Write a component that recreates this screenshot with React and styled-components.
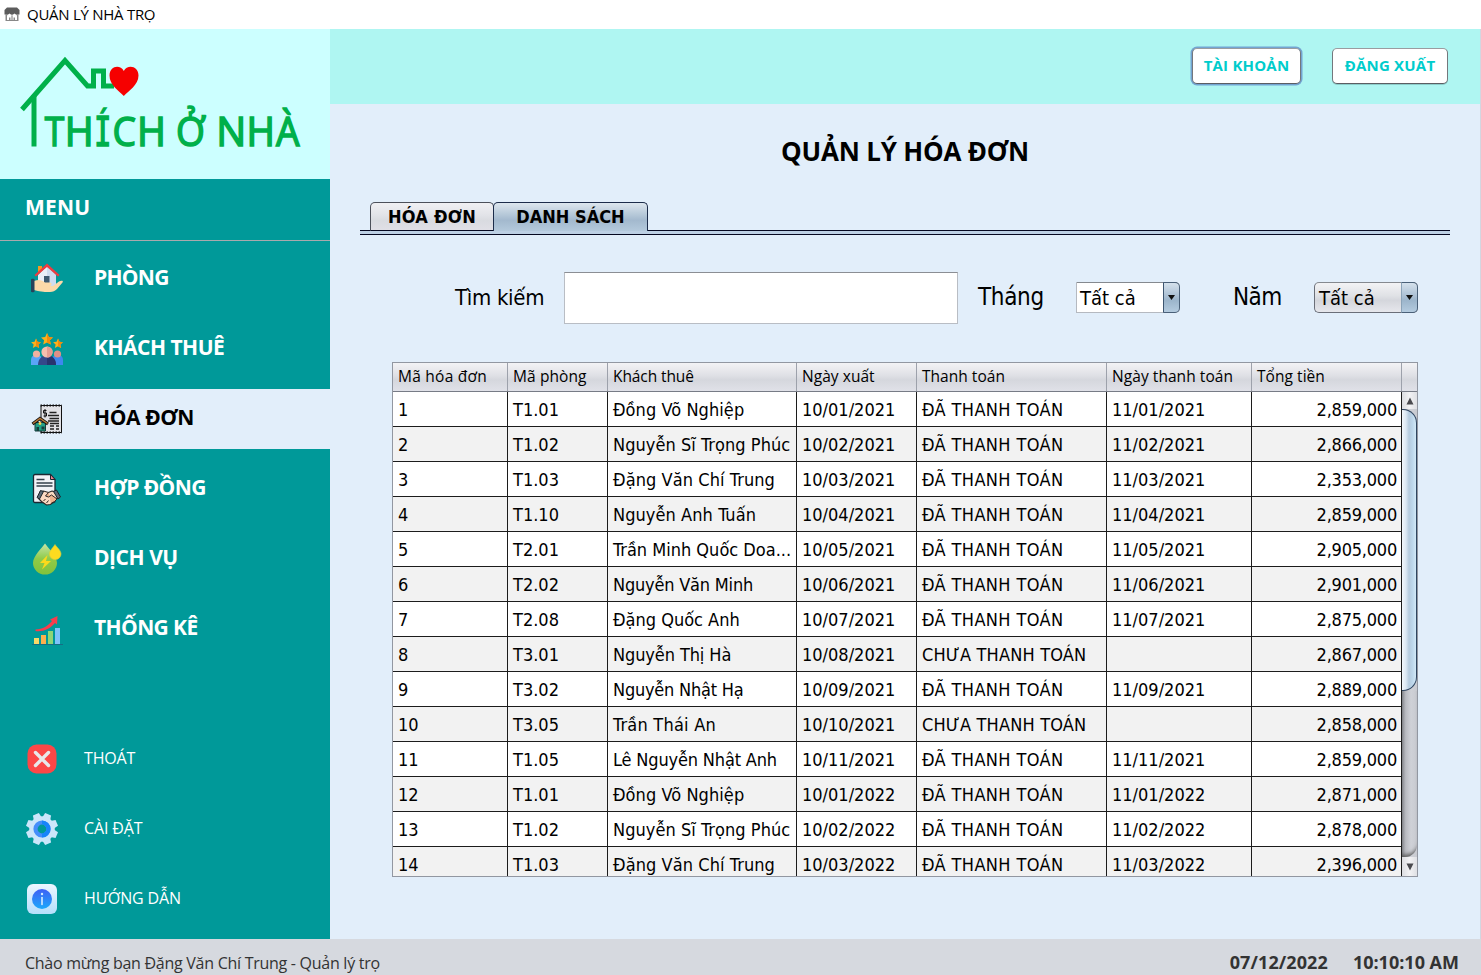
import React from "react";
import styled, { createGlobalStyle } from "styled-components";

const SEGOE = '"Open Sans", "Noto Sans", sans-serif';
const TAHOMA = '"DejaVu Sans Condensed", "DejaVu Sans", sans-serif';

const GlobalStyle = createGlobalStyle`
  * { box-sizing: border-box; }
  body { margin: 0; overflow: hidden; background: #fff; }
`;

const Window = styled.div`
  width: 1481px;
  height: 975px;
  display: flex;
  flex-direction: column;
  overflow: hidden;
  color: #000;
  font-family: ${SEGOE};
  white-space: nowrap;
`;

const TitleBar = styled.header`
  height: 29px;
  flex: none;
  display: flex;
  align-items: center;
  gap: 7px;
  padding-left: 4px;
  background: #fff;
  font-size: 15px;
  line-height: 27px;
  letter-spacing: -0.27px;
  svg { display: block; }
  span { padding-bottom: 1px; }
`;

const Body = styled.div`
  height: 910px;
  flex: none;
  display: flex;
  border-right: 1px solid #d3d6e0;
`;

const Sidebar = styled.aside`
  width: 330px;
  flex: none;
  display: flex;
  flex-direction: column;
  background: #009999;
`;

const LogoBox = styled.div`
  height: 150px;
  background: #ccffff;
  svg { display: block; }
`;

const MenuHeading = styled.div`
  height: 62px;
  padding: 0 0 5px 25px;
  display: flex;
  align-items: center;
  border-bottom: 1px solid #a9a9ad;
  color: #fff;
  font-weight: 700;
  font-size: 21px;
  letter-spacing: 0.2px;
`;

const MenuList = styled.nav`
  display: flex;
  flex-direction: column;
  gap: 10px;
  margin-top: ${(p) => p.$top}px;
`;

const MenuItem = styled.div`
  height: 60px;
  display: flex;
  align-items: center;
  padding-left: 30px;
  gap: 30px;
  background: ${(p) => (p.$active ? "#e2eefa" : "transparent")};
  color: ${(p) => (p.$active ? "#000" : "#fff")};
  svg { display: block; flex: none; }
`;

const MenuLabel = styled.span`
  font-weight: 700;
  font-size: 21px;
  line-height: 30px;
  padding-bottom: 4px;
  letter-spacing: ${(p) => p.$ls || 0}px;
`;

const SmallItem = styled(MenuItem)`
  padding-left: 25px;
  gap: 25px;
`;

const SmallLabel = styled.span`
  font-size: 16px;
  line-height: 22px;
  padding-bottom: 3px;
  letter-spacing: -0.15px;
`;

const Main = styled.main`
  flex: 1;
  display: flex;
  flex-direction: column;
  background: #e2eefa;
`;

const TopBar = styled.div`
  height: 75px;
  flex: none;
  display: flex;
  justify-content: flex-end;
  align-items: center;
  gap: 31px;
  padding-right: 32px;
  background: #aff6f2;
`;

const TopButton = styled.button`
  width: ${(p) => p.$w}px;
  height: 36px;
  margin-top: -1px;
  padding: 0 0 2px;
  border: 1px solid;
  border-color: #9a9ca0 #74777c #5b5e63;
  border-radius: 5px;
  background: #fff;
  box-shadow: ${(p) => (p.$focus ? "0 0 0 1.5px #73a4d1" : "0 1px 0 rgba(60,110,110,.3)")};
  color: #00cccc;
  font-family: ${SEGOE};
  font-weight: 700;
  font-size: 15px;
  letter-spacing: 0.2px;
`;

const PageTitle = styled.h1`
  margin: 29px 0 0;
  height: 36px;
  line-height: 36px;
  text-align: center;
  font-size: 26px;
  font-weight: 700;
  letter-spacing: -0.2px;
`;

const Tabs = styled.div`
  display: flex;
  margin: 33px 30px 0;
  height: 28px;
  padding-left: 10px;
`;

const Tab = styled.div`
  width: ${(p) => p.$w}px;
  height: 29px;
  margin-left: ${(p) => p.$pull || 0}px;
  border: 1px solid ${(p) => (p.$active ? "#1c2c4a" : "#4c505a")};
  border-bottom: ${(p) => (p.$active ? "0" : "1px solid #050820")};
  border-radius: 5px 5px 0 0;
  background: ${(p) =>
    p.$active
      ? "linear-gradient(#dde6ee 0%, #b7c9d9 40%, #a3b9ce 62%, #b4c9dc 100%)"
      : "linear-gradient(#f0f0f3 0%, #e2e3e8 45%, #d9dbe0 65%, #e0dfe6 100%)"};
  position: relative;
  z-index: ${(p) => (p.$active ? 1 : 0)};
  text-align: center;
  font-family: ${TAHOMA};
  font-size: 18px;
  font-weight: 700;
  line-height: 28px;
  letter-spacing: ${(p) => p.$ls || 0}px;
`;

const TabRule = styled.div`
  height: 5px;
  margin: 0 30px;
  border-top: 1px solid #050820;
  border-bottom: 1px solid #050820;
  background: #bdd0e4;
`;

const Filters = styled.div`
  display: flex;
  align-items: center;
  height: 52px;
  margin: 37px 62px 0 125px;
  font-family: ${TAHOMA};
`;

const FilterLabel = styled.label`
  width: ${(p) => p.$w}px;
  font-size: ${(p) => p.$size}px;
  padding-bottom: 2px;
  letter-spacing: ${(p) => p.$ls || 0}px;
`;

const SearchInput = styled.input`
  width: 394px;
  height: 52px;
  margin-right: 20px;
  border: 1px solid #b9bdc4;
  border-top-color: #8b8e94;
  background: #fff;
  outline: 0;
`;

const Select = styled.div`
  width: 104px;
  height: 31px;
  margin: 0 ${(p) => p.$mr || 0}px 1px 0;
  display: flex;
  border: 1px solid ${(p) => (p.$filled ? "#6a6e78" : "#b5b9c0")};
  border-top-color: #85898f;
  border-right: 0;
  border-radius: ${(p) => (p.$filled ? "5px" : "0 5px 5px 0")};
  background: ${(p) =>
    p.$filled ? "linear-gradient(#f3f3f5, #dfe1e5 45%, #d4d6dc 60%, #e6e7ec)" : "#fff"};
  font-size: 20px;
  line-height: 30px;
  span { flex: 1; padding-left: ${(p) => (p.$filled ? 4 : 3)}px; }
`;

const SelectArrow = styled.div`
  width: 17px;
  margin: -1px 0;
  display: flex;
  align-items: center;
  justify-content: center;
  border: 1px solid #4a6078;
  border-left-color: ${(p) => (p.$filled ? "#8ba3b8" : "#3d5570")};
  border-radius: 0 5px 5px 0;
  background: linear-gradient(#d5e1ec, #abc0d4 45%, #9cb5cb 60%, #b4cbdf);
`;

const TableFrame = styled.div`
  display: flex;
  flex-direction: column;
  width: 1026px;
  height: 515px;
  margin: 38px 0 0 62px;
  border: 1px solid #9297a1;
  overflow: hidden;
`;

const columns = "115px 100px 189px 120px 190px 145px 150px";

const HeadRow = styled.div`
  height: 29px;
  flex: none;
  display: grid;
  grid-template-columns: ${columns} 15px;
  background: linear-gradient(#f3f3f5 0%, #dfe0e5 45%, #d5d7dd 60%, #e0e1e8 100%);
  border-bottom: 1px solid #777b86;
`;

const HeadCell = styled.div`
  padding-left: 5px;
  border-right: 1px solid #9da1ab;
  font-size: 15.5px;
  line-height: 26px;
  letter-spacing: ${(p) => p.$ls || 0}px;
  &:last-child { border-right: 0; }
`;

const TableBody = styled.div`
  flex: 1;
  min-height: 0;
  display: flex;
`;

const Rows = styled.div`
  width: 1009px;
  flex: none;
  overflow: hidden;
`;

const Row = styled.div`
  height: 35px;
  display: grid;
  grid-template-columns: ${columns};
  background: ${(p) => (p.$alt ? "#f2f2f2" : "#fff")};
  border-bottom: 1px solid #1c1c1c;
`;

const Cell = styled.div`
  padding: 0 4px 0 5px;
  border-right: 1px solid #1c1c1c;
  font-family: ${TAHOMA};
  font-size: 18px;
  line-height: 35px;
  letter-spacing: ${(p) => p.$ls || 0}px;
  text-align: ${(p) => (p.$right ? "right" : "left")};
  overflow: hidden;
`;

const ScrollBar = styled.div`
  width: 15px;
  display: flex;
  flex-direction: column;
  background: linear-gradient(90deg, #85878c, #b9bbc1 25%, #cfd1d7 60%, #c8cad0);
`;

const ScrollButton = styled.div`
  height: ${(p) => p.$h}px;
  flex: none;
  display: flex;
  align-items: center;
  justify-content: center;
  background: linear-gradient(90deg, #dcdde1, #f2f2f4 50%, #dfe0e4);
`;

const ScrollThumb = styled.div`
  height: 282px;
  flex: none;
  border: 1px solid #2f4560;
  border-left: 0;
  border-radius: 0 14px 14px 0;
  background: linear-gradient(90deg, #f2f7fb 0%, #dce8f3 28%, #b5cbde 50%, #bdd7eb 75%, #d2e9f7 100%);
`;

const ScrollTrack = styled.div`
  flex: 1;
  box-shadow: inset 0 -5px 4px -3px #555;
  border-bottom-right-radius: 12px;
`;

const StatusBar = styled.footer`
  height: 36px;
  flex: none;
  display: flex;
  align-items: flex-start;
  padding: 12px 22px 0 25px;
  background: #d6d9df;
  color: #333;
  line-height: 24px;
`;

const Welcome = styled.span`
  flex: 1;
  font-size: 16px;
  letter-spacing: -0.27px;
`;

const Clock = styled.span`
  margin-left: 25px;
  font-weight: 700;
  font-size: 18px;
  line-height: 22px;
  letter-spacing: ${(p) => p.$ls || 0}px;
`;

const AppIcon = () => (
  <svg width="16" height="15" viewBox="0 0 16 15">
    <path d="M3 .5h10l2.500 2.500v4.500H.5V3z" fill="#5c5c5c" />
    <path d="M1.500 7h13v7h-13z" fill="#888" />
    <path d="M3 8.500L5.500 6.500 8 8.500l2.500-2L13 8.500V13h-2v-2.500H9.500V13h-3v-2.500H5V13H3z" fill="#fff" />
    <path d="M7.500 8.500h1V13h-1z" fill="#777" />
  </svg>
);

const Logo = () => (
  <svg width="330" height="150" viewBox="0 0 330 150">
    <g fill="none" stroke="#00b04a" strokeWidth="5">
      <path d="M22 80.500L65 31.500L87.500 57H93.500V42H103.500V57H114" />
      <path d="M34 66V117.500" />
    </g>
    <path d="M123.800 67C119 62 109.500 56 109.500 46.500C109.500 37 120 35 123.800 42C127.500 35 138.500 37 138.500 46.500C138.500 56 128.500 62 123.800 67Z" fill="#f60000" />
    <g fill="#00b04a" stroke="#00b04a" strokeWidth="1.500" fontFamily='"Open Sans", sans-serif' fontSize="40.500">
      <text y="116.500" x="44.800" textLength="19.500" lengthAdjust="spacingAndGlyphs">T</text>
      <text y="116.500" x="64.800" textLength="29" lengthAdjust="spacingAndGlyphs">H</text>
      <text y="116.500" x="94.300" textLength="17" lengthAdjust="spacingAndGlyphs" fontFamily='"DejaVu Sans Mono"' strokeWidth="1.700">Í</text>
      <text y="116.500" x="112.600" textLength="23.500" lengthAdjust="spacingAndGlyphs">C</text>
      <text y="116.500" x="137" textLength="29" lengthAdjust="spacingAndGlyphs">H</text>
      <text y="116.500" x="176" textLength="29" lengthAdjust="spacingAndGlyphs">Ở</text>
      <text y="116.500" x="216.300" textLength="30" lengthAdjust="spacingAndGlyphs">N</text>
      <text y="116.500" x="246.500" textLength="28.500" lengthAdjust="spacingAndGlyphs">H</text>
      <text y="116.500" x="276" textLength="23.500" lengthAdjust="spacingAndGlyphs">À</text>
    </g>
  </svg>
);

const RoomIcon = () => (
  <svg width="34" height="34" viewBox="0 0 34 34">
    <path d="M8 4h4v6H8z" fill="#f39a1e" />
    <path d="M8 13L17 4l9 9v13H8z" fill="#e9eef8" />
    <path d="M17 4l9 9v13h-9z" fill="#cfdcf0" />
    <path d="M4.500 13L17 1.500L29.500 13l-1.500 1.500L17 5 6 14.500z" fill="#ee3b41" />
    <path d="M14 14h5.500v8H14z" fill="#3d5870" />
    <path d="M4 19c5-2 8-1 11 1.500h5c2 0 2 3 0 3.500h-3 6l6-4.500c2-1.500 5-1 3.500 1L27 27c-2 2-4 3-7 3-5 0-8 0-16-2z" fill="#fcd9a9" />
    <path d="M1 17.500c0-1 3.500-1 3.500 0v12c0 1-3.500 1-3.500 0z" fill="#27435b" />
  </svg>
);

const Star = ({ x, y, s }) => (
  <g transform={`translate(${x} ${y}) scale(${s})`}>
    <path d="M0-6L1.800-2 6-1.600 2.900 1.300 3.800 5.600 0 3.400-3.800 5.600-2.900 1.300-6-1.600-1.800-2z" fill="#fdb01a" />
    <path d="M0-6L1.800-2 6-1.600 2.900 1.300 3.800 5.600 0 3.400z" fill="#f28b0c" />
  </g>
);

const CustomerIcon = () => (
  <svg width="34" height="34" viewBox="0 0 34 34">
    <Star x={17} y={7} s={1} />
    <Star x={6} y={11.5} s={0.82} />
    <Star x={28} y={11.5} s={0.82} />
    <path d="M1 33v-5a5.500 5.500 0 0 1 11 0v5z" fill="#5aa5f8" />
    <path d="M22 33v-5a5.500 5.500 0 0 1 11 0v5z" fill="#3f87ee" />
    <circle cx="6.500" cy="22" r="3.600" fill="#f3b1a0" />
    <circle cx="27.500" cy="22" r="3.600" fill="#e08f86" />
    <path d="M8 33c0-13 18-13 18 0z" fill="#34478a" />
    <path d="M17 23.500c5 0 9 3 9 9.500h-9z" fill="#28346e" />
    <circle cx="17" cy="20" r="5.600" fill="#f6bfae" />
    <path d="M17 14.400a5.600 5.600 0 0 1 0 11.200z" fill="#e69c91" />
  </svg>
);

const InvoiceIcon = () => (
  <svg width="34" height="34" viewBox="0 0 34 34">
    <path d="M11 3.500H31.500V30.500H11z" fill="#e2e2e6" stroke="#111" />
    <path d="M10.500 3.500H32M10.500 30.500H32" stroke="#111" strokeWidth="2" strokeDasharray="1.500 1.500" />
    <path d="M19.500 10.500h7M18 13.500h11M19.500 16.500h9.500M18 19h11M20 21.500h9M20 24h4M26 24h3M20 27h4M26 27h3" stroke="#222" strokeWidth="1.300" />
    <path d="M16.500 8.500h-3v2.500h3v3h-3M15 7v8.500" stroke="#111" fill="none" />
    <path d="M5 20.500h10.500v8.500H5z" fill="#239f86" stroke="#173c3b" />
    <path d="M2.500 22L10 16.500l8 5.500" fill="none" stroke="#111" strokeWidth="3.200" />
    <path d="M3 21.500L10 16.500l7.500 5" fill="none" stroke="#b97836" strokeWidth="1.500" />
    <circle cx="10" cy="21.500" r="1.400" fill="#ffcf4d" />
    <path d="M6.500 25h2.500v4H6.500zM11.500 24.500h3v3h-3z" fill="#173c3b" />
  </svg>
);

const ContractIcon = () => (
  <svg width="34" height="34" viewBox="0 0 34 34">
    <path d="M5 2.500H20.500L25 7.500V29Q25 30.500 23.500 30.500H5Q3.500 30.500 3.500 29V4Q3.500 2.500 5 2.500z" fill="#f1f3f7" stroke="#1b2833" strokeWidth="1.300" />
    <path d="M20.500 2.500V7.500h4.500z" fill="#f2848b" stroke="#1b2833" />
    <path d="M6.500 7.500h8M6.500 11h16M6.500 14h16" stroke="#33404b" strokeWidth="1.300" />
    <path d="M10 20l3.500-1 5 1.500 3.500-1.500 4.500 1 1.500 5-3.500 4-4 3.500-4 .5-5-3.500-3-3z" fill="#fbd9c2" stroke="#2b2523" strokeWidth="1.100" />
    <path d="M18.500 20.500l-3 3.500 3 1 3-2 5.500 4-2.500 2.500-3.500 2" fill="#eeb28e" stroke="#2b2523" />
    <path d="M10.500 18.500L7 25.500l2.500 1.500L13.500 19.500zM26.500 18l4 7-2.500 2-4.500-7.500z" fill="#596a78" stroke="#1b2328" />
    <path d="M13.500 29l2-2M16.500 31l2-2.500" stroke="#2b2523" />
  </svg>
);

const ServiceIcon = () => (
  <svg width="34" height="34" viewBox="0 0 34 34">
    <defs>
      <linearGradient id="drop" x1="0" y1="0" x2="0" y2="1">
        <stop offset="0" stopColor="#c5e5a7" />
        <stop offset=".5" stopColor="#8fca48" />
        <stop offset="1" stopColor="#82c23b" />
      </linearGradient>
    </defs>
    <path d="M15 1.500C18 6 27 14 27 21a12 11.500 0 0 1-24 0C3 14 12 6 15 1.500z" fill="url(#drop)" />
    <path d="M25 2.500c2 3 6 6 6 9.500a5.800 5.500 0 0 1-11.600 0C19.400 8.500 23 6 25 2.500z" fill="#fddb20" stroke="#d9ce3c" strokeWidth=".6" />
    <path d="M17.500 13L10 21h4.500l-2.500 6.500L21 19h-5z" fill="#fbd91c" />
  </svg>
);

const StatsIcon = () => (
  <svg width="34" height="34" viewBox="0 0 34 34">
    <path d="M4 26h5v6H4z" fill="#f8d968" />
    <path d="M11 23h5v9h-5z" fill="#fcb04d" />
    <path d="M18 19h5v13h-5z" fill="#8ed576" />
    <path d="M25 16h5v16h-5z" fill="#7dc2fb" />
    <path d="M2 32.500h31" stroke="#1e5c7c" strokeWidth=".7" />
    <path d="M5.500 17.500C13 17 18 14 22 9L20 7.500l7.500-3.500-.5 8.500-2-1.500C20 17 13 20 5.500 19z" fill="#f83c4c" />
  </svg>
);

const ExitIcon = () => (
  <svg width="34" height="34" viewBox="0 0 34 34">
    <rect x="2.500" y="2.500" width="29" height="29" rx="9" fill="#fc4747" />
    <path d="M10.500 10.500l13 13M23.500 10.500l-13 13" stroke="#e8e8ea" strokeWidth="3.400" strokeLinecap="round" />
  </svg>
);

const GearIcon = () => (
  <svg width="34" height="34" viewBox="0 0 34 34">
    <g fill="#cbe6fa">
      {[22.5, 67.5, 112.5, 157.5].map((a) => (
        <path key={a} d="M12-4L16-3.200V3.200L12 4H-12L-16 3.200V-3.200L-12-4z" transform={`translate(17 17) rotate(${a})`} />
      ))}
      <circle cx="17" cy="17" r="12.800" />
    </g>
    <circle cx="17" cy="17" r="6.500" fill="#009999" stroke="#448efa" strokeWidth="4.200" />
    <path d="M17 10.500a6.500 6.500 0 0 1 0 13" fill="none" stroke="#1785fa" strokeWidth="4.200" />
  </svg>
);

const InfoIcon = () => (
  <svg width="34" height="34" viewBox="0 0 34 34">
    <defs>
      <linearGradient id="plate" x1="0" y1="0" x2="0" y2="1">
        <stop offset="0" stopColor="#ecf6ff" />
        <stop offset="1" stopColor="#b5dffc" />
      </linearGradient>
      <linearGradient id="disc" x1="0" y1="0" x2="0" y2="1">
        <stop offset="0" stopColor="#3f60f5" />
        <stop offset="1" stopColor="#1ba9fb" />
      </linearGradient>
    </defs>
    <rect x="2" y="2" width="30" height="30" rx="6" fill="url(#plate)" />
    <circle cx="17" cy="17" r="10" fill="url(#disc)" />
    <path d="M17 15.500v7" stroke="#d6ecff" strokeWidth="1.600" strokeLinecap="round" />
    <circle cx="17" cy="12" r="1.200" fill="#d6ecff" />
  </svg>
);

const Triangle = ({ up }) => (
  <svg width="8" height="8" viewBox="0 0 8 8">
    <path d={up ? "M4 .5L7.500 7.500H.5z" : "M4 7.500L.5 .5h7z"} fill="#4a4a4e" />
  </svg>
);

const Caret = () => (
  <svg width="7" height="5" viewBox="0 0 7 5">
    <path d="M0 0h7L3.500 5z" fill="#111" />
  </svg>
);

const menu = [
  { label: "PHÒNG", Icon: RoomIcon, ls: -0.7 },
  { label: "KHÁCH THUÊ", Icon: CustomerIcon, ls: -0.5 },
  { label: "HÓA ĐƠN", Icon: InvoiceIcon, ls: -0.4, active: true },
  { label: "HỢP ĐỒNG", Icon: ContractIcon, ls: -0.6 },
  { label: "DỊCH VỤ", Icon: ServiceIcon, ls: -0.45 },
  { label: "THỐNG KÊ", Icon: StatsIcon, ls: -0.6 },
];

const tools = [
  { label: "THOÁT", Icon: ExitIcon },
  { label: "CÀI ĐẶT", Icon: GearIcon },
  { label: "HƯỚNG DẪN", Icon: InfoIcon },
];

const headers = [
  ["Mã hóa đơn", 0.25],
  ["Mã phòng", 0.1],
  ["Khách thuê", -0.1],
  ["Ngày xuất", 0.05],
  ["Thanh toán", 0.03],
  ["Ngày thanh toán", 0.06],
  ["Tổng tiền", 0.05],
  ["", 0],
];

const PAID = "ĐÃ THANH TOÁN";
const UNPAID = "CHƯA THANH TOÁN";

const invoices = [
  ["1", "T1.01", "Đồng Võ Nghiệp", "10/01/2021", PAID, "11/01/2021", "2,859,000"],
  ["2", "T1.02", "Nguyễn Sĩ Trọng Phúc", "10/02/2021", PAID, "11/02/2021", "2,866,000"],
  ["3", "T1.03", "Đặng Văn Chí Trung", "10/03/2021", PAID, "11/03/2021", "2,353,000"],
  ["4", "T1.10", "Nguyễn Anh Tuấn", "10/04/2021", PAID, "11/04/2021", "2,859,000"],
  ["5", "T2.01", "Trần Minh Quốc Doa...", "10/05/2021", PAID, "11/05/2021", "2,905,000"],
  ["6", "T2.02", "Nguyễn Văn Minh", "10/06/2021", PAID, "11/06/2021", "2,901,000"],
  ["7", "T2.08", "Đặng Quốc Anh", "10/07/2021", PAID, "11/07/2021", "2,875,000"],
  ["8", "T3.01", "Nguyễn Thị Hà", "10/08/2021", UNPAID, "", "2,867,000"],
  ["9", "T3.02", "Nguyễn Nhật Hạ", "10/09/2021", PAID, "11/09/2021", "2,889,000"],
  ["10", "T3.05", "Trần Thái An", "10/10/2021", UNPAID, "", "2,858,000"],
  ["11", "T1.05", "Lê Nguyễn Nhật Anh", "10/11/2021", PAID, "11/11/2021", "2,859,000"],
  ["12", "T1.01", "Đồng Võ Nghiệp", "10/01/2022", PAID, "11/01/2022", "2,871,000"],
  ["13", "T1.02", "Nguyễn Sĩ Trọng Phúc", "10/02/2022", PAID, "11/02/2022", "2,878,000"],
  ["14", "T1.03", "Đặng Văn Chí Trung", "10/03/2022", PAID, "11/03/2022", "2,396,000"],
];

const tracking = {
  [PAID]: 0.38,
  [UNPAID]: 0.18,
  "Đồng Võ Nghiệp": 0.07,
  "Nguyễn Sĩ Trọng Phúc": 0.05,
  "Đặng Văn Chí Trung": 0.08,
  "Nguyễn Anh Tuấn": 0.07,
  "Nguyễn Văn Minh": -0.2,
  "Nguyễn Thị Hà": -0.1,
  "Nguyễn Nhật Hạ": -0.22,
  "Trần Thái An": 0.22,
  "Lê Nguyễn Nhật Anh": -0.16,
};

export default function App() {
  return (
    <Window>
      <GlobalStyle />
      <TitleBar>
        <AppIcon />
        <span>QUẢN LÝ NHÀ TRỌ</span>
      </TitleBar>
      <Body>
        <Sidebar>
          <LogoBox>
            <Logo />
          </LogoBox>
          <MenuHeading>MENU</MenuHeading>
          <MenuList $top={8}>
            {menu.map(({ label, Icon, ls, active }) => (
              <MenuItem key={label} $active={active}>
                <Icon />
                <MenuLabel $ls={ls}>{label}</MenuLabel>
              </MenuItem>
            ))}
          </MenuList>
          <MenuList $top={70}>
            {tools.map(({ label, Icon }) => (
              <SmallItem key={label}>
                <Icon />
                <SmallLabel>{label}</SmallLabel>
              </SmallItem>
            ))}
          </MenuList>
        </Sidebar>
        <Main>
          <TopBar>
            <TopButton $w={109} $focus>TÀI KHOẢN</TopButton>
            <TopButton $w={116}>ĐĂNG XUẤT</TopButton>
          </TopBar>
          <PageTitle>QUẢN LÝ HÓA ĐƠN</PageTitle>
          <Tabs>
            <Tab $w={124} $ls={0.25}>HÓA ĐƠN</Tab>
            <Tab $w={155} $pull={-1} $active>DANH SÁCH</Tab>
          </Tabs>
          <TabRule />
          <Filters>
            <FilterLabel $w={109} $size={22} $ls={-0.3}>Tìm kiếm</FilterLabel>
            <SearchInput />
            <FilterLabel $w={98} $size={24} $ls={-0.35}>Tháng</FilterLabel>
            <Select $mr={53}>
              <span>Tất cả</span>
              <SelectArrow><Caret /></SelectArrow>
            </Select>
            <FilterLabel $w={81} $size={24} $ls={-0.6}>Năm</FilterLabel>
            <Select $filled>
              <span>Tất cả</span>
              <SelectArrow $filled><Caret /></SelectArrow>
            </Select>
          </Filters>
          <TableFrame>
            <HeadRow>
              {headers.map(([text, ls], i) => (
                <HeadCell key={i} $ls={ls}>{text}</HeadCell>
              ))}
            </HeadRow>
            <TableBody>
              <Rows>
                {invoices.map((row, i) => (
                  <Row key={row[0]} $alt={i % 2 === 1}>
                    {row.map((text, c) => (
                      <Cell key={c} $right={c === 6} $ls={c === 6 ? -0.22 : tracking[text]}>{text}</Cell>
                    ))}
                  </Row>
                ))}
              </Rows>
              <ScrollBar>
                <ScrollButton $h={17}><Triangle up /></ScrollButton>
                <ScrollThumb />
                <ScrollTrack />
                <ScrollButton $h={19}><Triangle /></ScrollButton>
              </ScrollBar>
            </TableBody>
          </TableFrame>
        </Main>
      </Body>
      <StatusBar>
        <Welcome>Chào mừng bạn Đặng Văn Chí Trung - Quản lý trọ</Welcome>
        <Clock $ls={0.1}>07/12/2022</Clock>
        <Clock>10:10:10 AM</Clock>
      </StatusBar>
    </Window>
  );
}
